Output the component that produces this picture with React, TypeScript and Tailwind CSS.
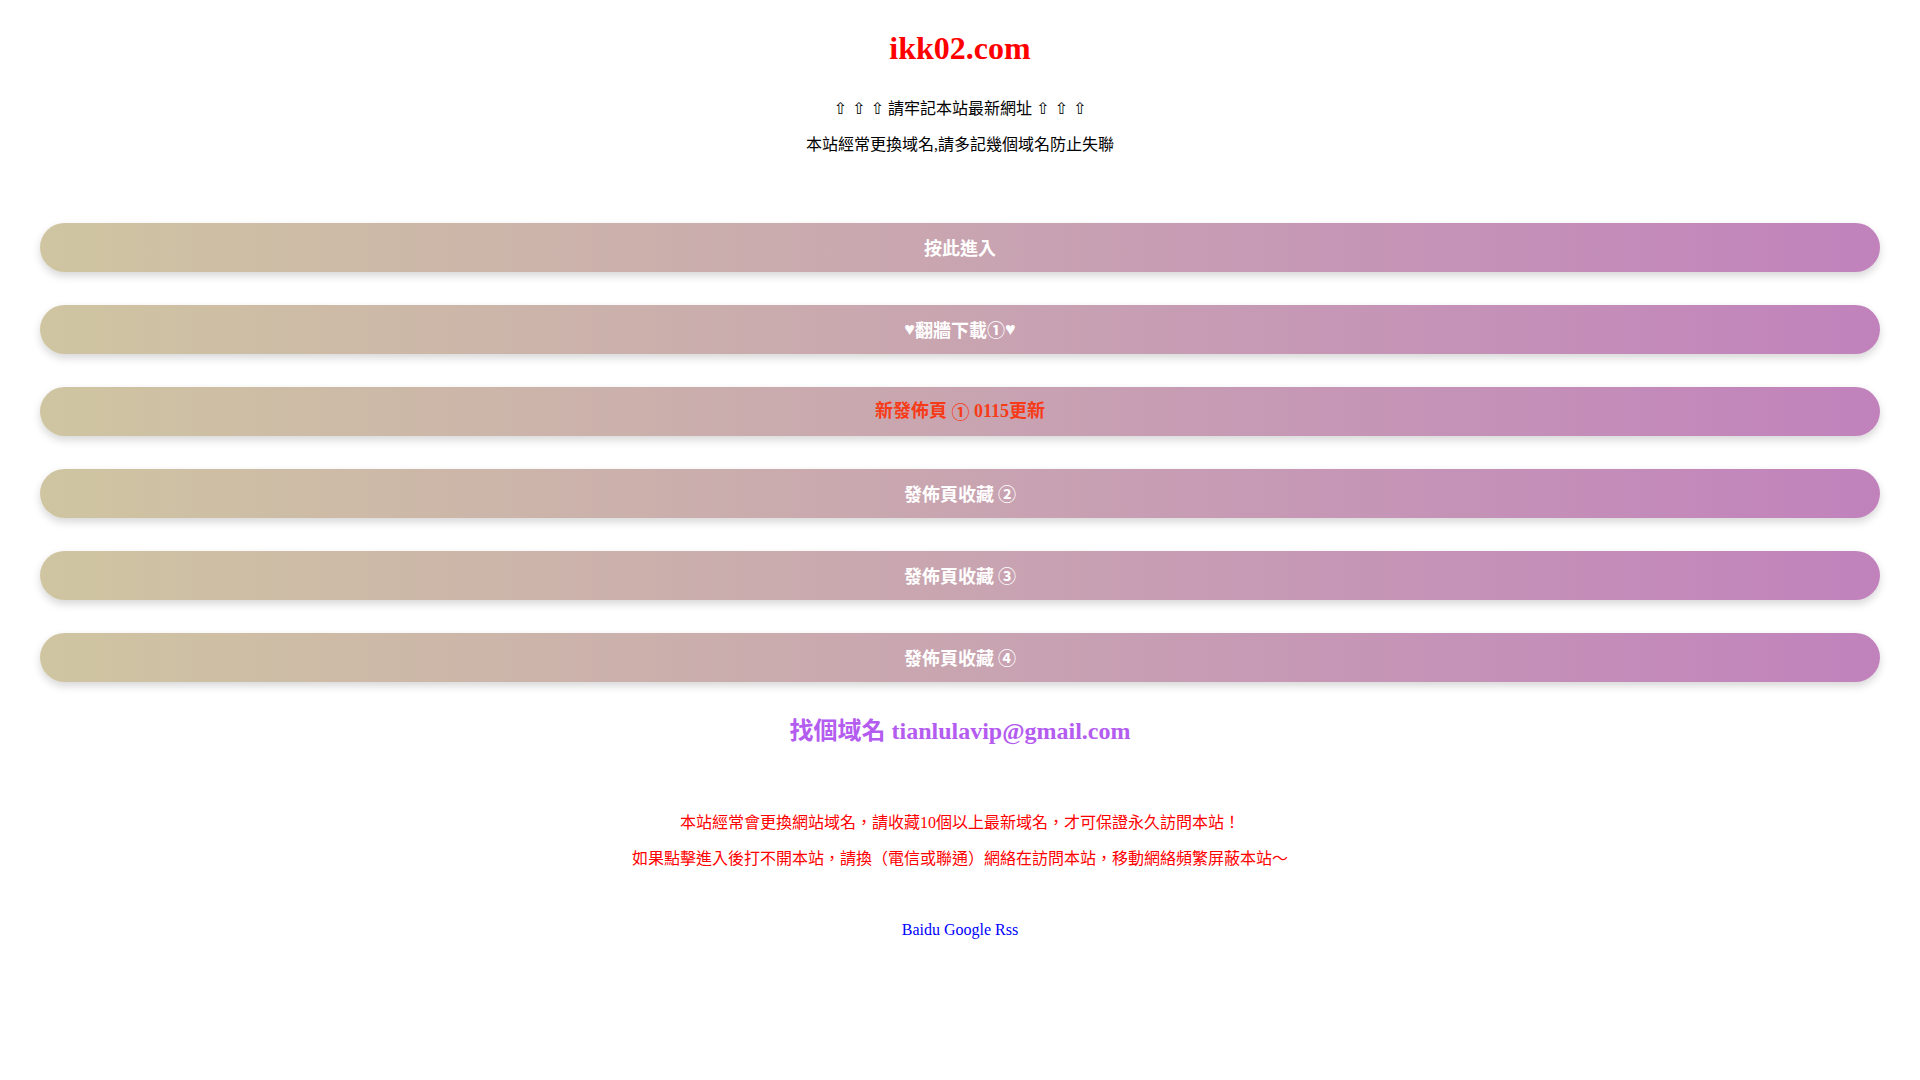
const Arrows = () => <span className="font-['DejaVu_Sans',sans-serif]">⇧ ⇧ ⇧</span>;
const Heart = () => <span className="font-['Liberation_Serif',serif]">♥</span>;

const btn =
  "h-[49px] flex items-center justify-center rounded-full bg-gradient-to-r from-[#cfc5a1] to-[#c182bc] shadow-[0_4px_8px_rgba(0,0,0,0.16)] text-[18px] font-bold";
const white = `${btn} text-white font-['Noto_Sans_CJK_TC',sans-serif]`;

export default function App() {
  return (
    <div className="min-h-screen w-full bg-white text-center text-black font-['Liberation_Serif','Noto_Sans_CJK_TC',serif]">
      <div className="pt-[29px]">
        <h1 className="text-[32px] leading-[38px] font-bold text-[#ff0000]">ikk02.com</h1>
        <p className="mt-[24px] text-[16px] leading-[36px]">
          <Arrows /> 請牢記本站最新網址 <Arrows />
        </p>
        <p className="text-[16px] leading-[36px]">本站經常更換域名,請多記幾個域名防止失聯</p>
      </div>

      {/* entry buttons */}
      <div className="mt-[60px] px-10 flex flex-col gap-[33px]">
        <a href="#" className={white}>按此進入</a>
        <a href="#" className={white}>
          <Heart />翻牆下載①<Heart />
        </a>
        <a href="#" className={`${btn} text-[#f73b18]`}>
          新發佈頁&nbsp;<span className="font-['Noto_Sans_CJK_TC',sans-serif]">①</span>&nbsp;0115更新
        </a>
        <a href="#" className={white}>發佈頁收藏 ②</a>
        <a href="#" className={white}>發佈頁收藏 ③</a>
        <a href="#" className={white}>發佈頁收藏 ④</a>
      </div>

      <p className="mt-[34px] text-[24px] leading-[30px] font-bold text-[#b45cf0]">找個域名 tianlulavip@gmail.com</p>

      <div className="mt-[59px] text-[16px] leading-[36px] text-[#ff0000]">
        <p>本站經常會更換網站域名，請收藏10個以上最新域名，才可保證永久訪問本站！</p>
        <p>如果點擊進入後打不開本站，請換（電信或聯通）網絡在訪問本站，移動網絡頻繁屏蔽本站～</p>
      </div>

      <p className="mt-[41px] text-[16px] leading-[24px] text-[#0000ff]">
        <a href="#">Baidu</a> <a href="#">Google</a> <a href="#">Rss</a>
      </p>
    </div>
  );
}
